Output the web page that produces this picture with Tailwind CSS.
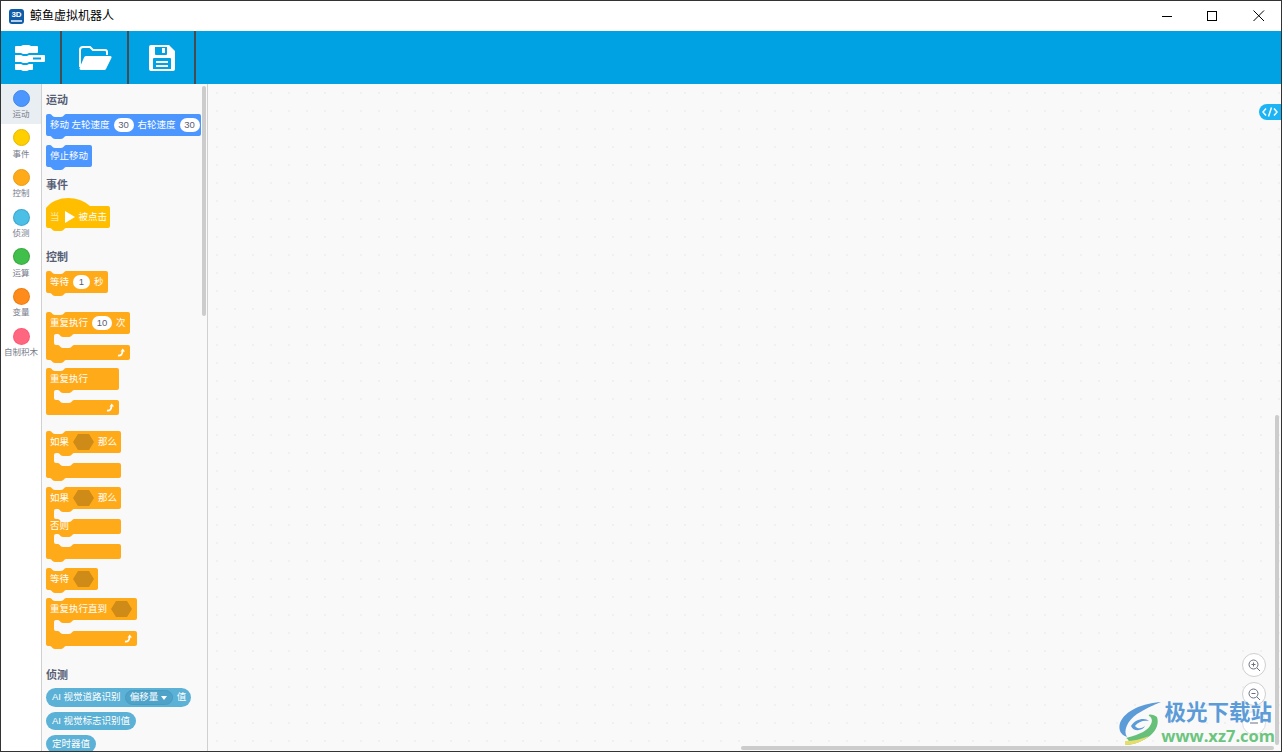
<!DOCTYPE html>
<html lang="zh-CN">
<head>
    <meta charset="UTF-8">
    <title>鲸鱼虚拟机器人</title>
    <script src="https://cdn.jsdelivr.net/npm/@tailwindcss/browser@4"></script>
</head>
<body class="overflow-hidden bg-white font-['Liberation_Sans','Noto_Sans_CJK_SC',sans-serif]">
<div class="relative flex flex-col w-full h-screen overflow-hidden border border-[#333333]">

    <!-- title bar -->
    <div class="flex items-center h-[30px] shrink-0 bg-white">
        <div class="ml-2 w-[15px] h-[15px] rounded-[3px] bg-[#0f5ca8] flex flex-col items-center justify-center text-white font-bold text-[8px] leading-[8px]">3D<span class="w-[11px] h-[2px] mt-[1px] bg-white/70"></span></div>
        <span class="ml-[6px] text-[12px] text-black">鲸鱼虚拟机器人</span>
        <div class="ml-auto flex items-center h-full">
            <svg width="46" height="30"><path d="M19 15.500H29" stroke="#000" fill="none"/></svg>
            <svg width="46" height="30"><rect x="18.500" y="10.500" width="9" height="9" stroke="#000" fill="none"/></svg>
            <svg width="46" height="30"><path d="M18.500 9.500L29 20M29 9.500L18.500 20" stroke="#000" fill="none"/></svg>
        </div>
    </div>

    <!-- toolbar -->
    <div class="flex h-[53px] shrink-0 bg-[#00a2e3]">
        <button class="w-[61px] h-full flex items-center justify-center border-r-2 border-[#444b52]">
            <svg class="-ml-[2px]" width="30" height="27" viewBox="0 0 30 27" fill="#fff">
                <path d="M1 2h5l2-1h6l2 1h6a1 1 0 0 1 1 1v5a1 1 0 0 1-1 1H14l-2 1H8L6 9H1a1 1 0 0 1-1-1V3a1 1 0 0 1 1-1z"/>
                <path fill-rule="evenodd" d="M0 11h6l2 1h4l2-1h15a1 1 0 0 1 1 1v5a1 1 0 0 1-1 1H14l-2 1H8l-2-1H0zM18 13.500v2h8v-2z"/>
                <path d="M0 20h6l2 1h4l2-1h4v5a1 1 0 0 1-1 1H14l-2 1H8l-2-1H1a1 1 0 0 1-1-1z"/>
            </svg>
        </button>
        <button class="w-[67px] h-full flex items-center justify-center border-r-2 border-[#444b52]">
            <svg width="34" height="26" viewBox="0 0 34 26" fill="none">
                <path d="M2 22V5a3 3 0 0 1 3-3h7l3 3h12a2 2 0 0 1 2 2v3" stroke="#fff" stroke-width="2"/>
                <path d="M8 11h24a1.500 1.500 0 0 1 1.400 2L28 24a2 2 0 0 1-2 1H3a1.500 1.500 0 0 1-1.400-2L6 12.500A2 2 0 0 1 8 11z" fill="#fff"/>
            </svg>
        </button>
        <button class="w-[67px] h-full flex items-center justify-center border-r-2 border-[#444b52]">
            <svg width="26" height="26" viewBox="0 0 26 26">
                <path fill="#fff" fill-rule="evenodd" d="M2 0h18l6 6v18a2 2 0 0 1-2 2H2a2 2 0 0 1-2-2V2a2 2 0 0 1 2-2zM6 2v7a1 1 0 0 0 1 1h10a1 1 0 0 0 1-1V2zM4 14v10h18V14a1 1 0 0 0-1-1H5a1 1 0 0 0-1 1z"/>
                <path fill="#fff" d="M13 3h3v5h-3zM7 16h12v2H7zM7 20h12v2H7z"/>
            </svg>
        </button>
    </div>

    <div class="flex flex-1 min-h-0">
        <!-- category tabs -->
        <div class="w-[41px] shrink-0 flex flex-col text-[8.500px] text-[#777c8a] border-r border-[#d0d0d0] bg-white">
            <div class="h-[39.700px] flex flex-col items-center pt-[5.500px] bg-[#e9eef2]">
                <span class="w-[17px] h-[17px] rounded-full bg-[#4c97ff] border border-[#3f87ea]"></span><span class="leading-[12px] mt-[1.500px]">运动</span>
            </div>
            <div class="h-[39.700px] flex flex-col items-center pt-[5.500px]">
                <span class="w-[17px] h-[17px] rounded-full bg-[#ffcf00] border border-[#e6b800]"></span><span class="leading-[12px] mt-[1.500px]">事件</span>
            </div>
            <div class="h-[39.700px] flex flex-col items-center pt-[5.500px]">
                <span class="w-[17px] h-[17px] rounded-full bg-[#ffab19] border border-[#ec9c13]"></span><span class="leading-[12px] mt-[1.500px]">控制</span>
            </div>
            <div class="h-[39.700px] flex flex-col items-center pt-[5.500px]">
                <span class="w-[17px] h-[17px] rounded-full bg-[#4cbfe6] border border-[#2e8eb8]/50"></span><span class="leading-[12px] mt-[1.500px]">侦测</span>
            </div>
            <div class="h-[39.700px] flex flex-col items-center pt-[5.500px]">
                <span class="w-[17px] h-[17px] rounded-full bg-[#40bf4a] border border-[#389438]/50"></span><span class="leading-[12px] mt-[1.500px]">运算</span>
            </div>
            <div class="h-[39.700px] flex flex-col items-center pt-[5.500px]">
                <span class="w-[17px] h-[17px] rounded-full bg-[#ff8c1a] border border-[#db6e00]/50"></span><span class="leading-[12px] mt-[1.500px]">变量</span>
            </div>
            <div class="h-[39.700px] flex flex-col items-center pt-[5.500px]">
                <span class="w-[17px] h-[17px] rounded-full bg-[#ff6680] border border-[#ff3355]/30"></span><span class="leading-[12px] mt-[1.500px] whitespace-nowrap">自制积木</span>
            </div>
        </div>

        <!-- block flyout -->
        <div class="relative w-[166px] shrink-0 overflow-hidden flex flex-col items-start pl-[4px] bg-[#f9f9f9] border-r border-[#d0d0d0] text-white text-[9.500px]">
            <h3 class="mt-[9px] h-[14px] leading-[14px] text-[11px] font-bold text-[#575e75]">运动</h3>

            <div class="relative mt-[7px] w-[155px] h-[22px] shrink-0 flex items-center pl-[4px] whitespace-nowrap">
                <svg class="absolute left-0 top-0 overflow-visible" width="155" height="22"><path fill="#4c97ff" d="M0,2 a2,2 0 0 1 2,-2 H4 c2,0 2,3 5,3 H15 c3,0 3,-3 5,-3 H153 a2,2 0 0 1 2,2 V20 a2,2 0 0 1 -2,2 H20 c-2,0 -2,3 -5,3 H9 c-3,0 -3,-3 -5,-3 H2 a2,2 0 0 1 -2,-2 Z"/></svg>
                <span class="relative">移动</span>
                <span class="relative ml-[2.500px]">左轮速度</span>
                <span class="relative ml-[4px] w-[20px] h-[14px] shrink-0 rounded-full bg-white text-[#575e75] flex items-center justify-center">30</span>
                <span class="relative ml-[4px]">右轮速度</span>
                <span class="relative ml-[4px] w-[20px] h-[14px] shrink-0 rounded-full bg-white text-[#575e75] flex items-center justify-center">30</span>
            </div>

            <div class="relative mt-[9px] w-[46px] h-[22px] shrink-0 flex items-center pl-[4px] whitespace-nowrap">
                <svg class="absolute left-0 top-0 overflow-visible" width="46" height="22"><path fill="#4c97ff" d="M0,2 a2,2 0 0 1 2,-2 H4 c2,0 2,3 5,3 H15 c3,0 3,-3 5,-3 H44 a2,2 0 0 1 2,2 V20 a2,2 0 0 1 -2,2 H20 c-2,0 -2,3 -5,3 H9 c-3,0 -3,-3 -5,-3 H2 a2,2 0 0 1 -2,-2 Z"/></svg>
                <span class="relative">停止移动</span>
            </div>

            <h3 class="mt-[11px] h-[14px] leading-[14px] text-[11px] font-bold text-[#575e75]">事件</h3>

            <div class="relative mt-[6px] w-[64px] h-[31px] shrink-0 flex items-center pl-[4px] pt-[7px] whitespace-nowrap">
                <svg class="absolute left-0 top-0 overflow-visible" width="64" height="31"><path fill="#ffbf00" d="M0,10 C10,-3 32,-3 44,8 H62 a2,2 0 0 1 2,2 V28 a2,2 0 0 1 -2,2 H20 c-2,0 -2,3 -5,3 H9 c-3,0 -3,-3 -5,-3 H2 a2,2 0 0 1 -2,-2 Z"/></svg>
                <span class="relative text-[#ffe9a8]">当</span>
                <svg class="relative ml-[5px]" width="10" height="12"><path d="M0 0L10 6L0 12Z" fill="#fff"/></svg>
                <span class="relative ml-[4px]">被点击</span>
            </div>

            <h3 class="mt-[20.500px] h-[14px] leading-[14px] text-[11px] font-bold text-[#575e75]">控制</h3>

            <div class="relative mt-[7.500px] w-[62px] h-[22px] shrink-0 flex items-center pl-[4px] whitespace-nowrap">
                <svg class="absolute left-0 top-0 overflow-visible" width="62" height="22"><path fill="#ffab19" d="M0,2 a2,2 0 0 1 2,-2 H4 c2,0 2,3 5,3 H15 c3,0 3,-3 5,-3 H60 a2,2 0 0 1 2,2 V20 a2,2 0 0 1 -2,2 H20 c-2,0 -2,3 -5,3 H9 c-3,0 -3,-3 -5,-3 H2 a2,2 0 0 1 -2,-2 Z"/></svg>
                <span class="relative">等待</span>
                <span class="relative ml-[4px] w-[17px] h-[14px] rounded-full bg-white text-[#575e75] flex items-center justify-center">1</span>
                <span class="relative ml-[4px]">秒</span>
            </div>

            <div class="relative mt-[19px] w-[84px] h-[48px] shrink-0 whitespace-nowrap">
                <svg class="absolute left-0 top-0 overflow-visible" width="84" height="48"><path fill="#ffab19" d="M0,2 a2,2 0 0 1 2,-2 H4 c2,0 2,3 5,3 H15 c3,0 3,-3 5,-3 H82 a2,2 0 0 1 2,2 V20 a2,2 0 0 1 -2,2 H28 c-2,0 -2,3 -5,3 H17 c-3,0 -3,-3 -5,-3 H10 a2,2 0 0 0 -2,2 V31 a2,2 0 0 0 2,2 H12 c2,0 2,3 5,3 H23 c3,0 3,-3 5,-3 H82 a2,2 0 0 1 2,2 V46 a2,2 0 0 1 -2,2 H20 c-2,0 -2,3 -5,3 H9 c-3,0 -3,-3 -5,-3 H2 a2,2 0 0 1 -2,-2 Z"/></svg>
                <div class="relative h-[22px] flex items-center pl-[4px]">
                    <span>重复执行</span>
                    <span class="ml-[4px] w-[20px] h-[14px] rounded-full bg-white text-[#575e75] flex items-center justify-center">10</span>
                    <span class="ml-[4px]">次</span>
                </div>
                <svg class="absolute right-[4px] bottom-[3px]" width="9" height="9" viewBox="0 0 9 9" fill="none"><path d="M1 7.500C4 8 5.500 6 5.500 3" stroke="#fff" stroke-width="1.800"/><path d="M3.500 3.500L5.700 .5L8 3.500Z" fill="#fff"/></svg>
            </div>

            <div class="relative mt-[8px] w-[73px] h-[47px] shrink-0 whitespace-nowrap">
                <svg class="absolute left-0 top-0 overflow-visible" width="73" height="47"><path fill="#ffab19" d="M0,2 a2,2 0 0 1 2,-2 H4 c2,0 2,3 5,3 H15 c3,0 3,-3 5,-3 H71 a2,2 0 0 1 2,2 V20 a2,2 0 0 1 -2,2 H28 c-2,0 -2,3 -5,3 H17 c-3,0 -3,-3 -5,-3 H10 a2,2 0 0 0 -2,2 V30 a2,2 0 0 0 2,2 H12 c2,0 2,3 5,3 H23 c3,0 3,-3 5,-3 H71 a2,2 0 0 1 2,2 V45 a2,2 0 0 1 -2,2 H2 a2,2 0 0 1 -2,-2 Z"/></svg>
                <div class="relative h-[22px] flex items-center pl-[4px]"><span>重复执行</span></div>
                <svg class="absolute right-[4px] bottom-[3px]" width="9" height="9" viewBox="0 0 9 9" fill="none"><path d="M1 7.500C4 8 5.500 6 5.500 3" stroke="#fff" stroke-width="1.800"/><path d="M3.500 3.500L5.700 .5L8 3.500Z" fill="#fff"/></svg>
            </div>

            <div class="relative mt-[16px] w-[75px] h-[47px] shrink-0 whitespace-nowrap">
                <svg class="absolute left-0 top-0 overflow-visible" width="75" height="47"><path fill="#ffab19" d="M0,2 a2,2 0 0 1 2,-2 H4 c2,0 2,3 5,3 H15 c3,0 3,-3 5,-3 H73 a2,2 0 0 1 2,2 V20 a2,2 0 0 1 -2,2 H28 c-2,0 -2,3 -5,3 H17 c-3,0 -3,-3 -5,-3 H10 a2,2 0 0 0 -2,2 V30 a2,2 0 0 0 2,2 H12 c2,0 2,3 5,3 H23 c3,0 3,-3 5,-3 H73 a2,2 0 0 1 2,2 V45 a2,2 0 0 1 -2,2 H20 c-2,0 -2,3 -5,3 H9 c-3,0 -3,-3 -5,-3 H2 a2,2 0 0 1 -2,-2 Z"/></svg>
                <div class="relative h-[22px] flex items-center pl-[4px]">
                    <span>如果</span>
                    <svg class="ml-[4px]" width="21" height="16"><path d="M5 0H16L21 8L16 16H5L0 8Z" fill="#cf8b17"/></svg>
                    <span class="ml-[4px]">那么</span>
                </div>
            </div>

            <div class="relative mt-[9px] w-[75px] h-[72px] shrink-0 whitespace-nowrap">
                <svg class="absolute left-0 top-0 overflow-visible" width="75" height="72"><path fill="#ffab19" d="M0,2 a2,2 0 0 1 2,-2 H4 c2,0 2,3 5,3 H15 c3,0 3,-3 5,-3 H73 a2,2 0 0 1 2,2 V20 a2,2 0 0 1 -2,2 H28 c-2,0 -2,3 -5,3 H17 c-3,0 -3,-3 -5,-3 H10 a2,2 0 0 0 -2,2 V30 a2,2 0 0 0 2,2 H12 c2,0 2,3 5,3 H23 c3,0 3,-3 5,-3 H73 a2,2 0 0 1 2,2 V45 a2,2 0 0 1 -2,2 H28 c-2,0 -2,3 -5,3 H17 c-3,0 -3,-3 -5,-3 H10 a2,2 0 0 0 -2,2 V55 a2,2 0 0 0 2,2 H12 c2,0 2,3 5,3 H23 c3,0 3,-3 5,-3 H73 a2,2 0 0 1 2,2 V70 a2,2 0 0 1 -2,2 H20 c-2,0 -2,3 -5,3 H9 c-3,0 -3,-3 -5,-3 H2 a2,2 0 0 1 -2,-2 Z"/></svg>
                <div class="relative h-[22px] flex items-center pl-[4px]">
                    <span>如果</span>
                    <svg class="ml-[4px]" width="21" height="16"><path d="M5 0H16L21 8L16 16H5L0 8Z" fill="#cf8b17"/></svg>
                    <span class="ml-[4px]">那么</span>
                </div>
                <div class="relative mt-[10px] h-[15px] flex items-center pl-[4px]"><span>否则</span></div>
            </div>

            <div class="relative mt-[9px] w-[52px] h-[22px] shrink-0 flex items-center pl-[4px] whitespace-nowrap">
                <svg class="absolute left-0 top-0 overflow-visible" width="52" height="22"><path fill="#ffab19" d="M0,2 a2,2 0 0 1 2,-2 H4 c2,0 2,3 5,3 H15 c3,0 3,-3 5,-3 H50 a2,2 0 0 1 2,2 V20 a2,2 0 0 1 -2,2 H20 c-2,0 -2,3 -5,3 H9 c-3,0 -3,-3 -5,-3 H2 a2,2 0 0 1 -2,-2 Z"/></svg>
                <span class="relative">等待</span>
                <svg class="relative ml-[4px]" width="21" height="16"><path d="M5 0H16L21 8L16 16H5L0 8Z" fill="#cf8b17"/></svg>
            </div>

            <div class="relative mt-[8px] w-[91px] h-[48px] shrink-0 whitespace-nowrap">
                <svg class="absolute left-0 top-0 overflow-visible" width="91" height="48"><path fill="#ffab19" d="M0,2 a2,2 0 0 1 2,-2 H4 c2,0 2,3 5,3 H15 c3,0 3,-3 5,-3 H89 a2,2 0 0 1 2,2 V20 a2,2 0 0 1 -2,2 H28 c-2,0 -2,3 -5,3 H17 c-3,0 -3,-3 -5,-3 H10 a2,2 0 0 0 -2,2 V31 a2,2 0 0 0 2,2 H12 c2,0 2,3 5,3 H23 c3,0 3,-3 5,-3 H89 a2,2 0 0 1 2,2 V46 a2,2 0 0 1 -2,2 H20 c-2,0 -2,3 -5,3 H9 c-3,0 -3,-3 -5,-3 H2 a2,2 0 0 1 -2,-2 Z"/></svg>
                <div class="relative h-[22px] flex items-center pl-[4px]">
                    <span>重复执行直到</span>
                    <svg class="ml-[4px]" width="21" height="16"><path d="M5 0H16L21 8L16 16H5L0 8Z" fill="#cf8b17"/></svg>
                </div>
                <svg class="absolute right-[4px] bottom-[3px]" width="9" height="9" viewBox="0 0 9 9" fill="none"><path d="M1 7.500C4 8 5.500 6 5.500 3" stroke="#fff" stroke-width="1.800"/><path d="M3.500 3.500L5.700 .5L8 3.500Z" fill="#fff"/></svg>
            </div>

            <h3 class="mt-[22px] h-[14px] leading-[14px] text-[11px] font-bold text-[#575e75]">侦测</h3>

            <div class="mt-[6px] w-[145px] h-[19px] shrink-0 rounded-full bg-[#5cb1d6] flex items-center pl-[6px] whitespace-nowrap">
                <span>AI 视觉道路识别</span>
                <span class="ml-[4px] w-[48px] h-[15px] rounded-full bg-[#4fa3c9] border border-[#4a9bc0] flex items-center justify-center">偏移量<svg class="ml-[3px]" width="6" height="4"><path d="M0 0H6L3 4Z" fill="#fff"/></svg></span>
                <span class="ml-[4px]">值</span>
            </div>
            <div class="mt-[5px] w-[90px] h-[18px] shrink-0 rounded-full bg-[#5cb1d6] flex items-center pl-[6px] whitespace-nowrap">AI 视觉标志识别值</div>
            <div class="mt-[5px] w-[50px] h-[18px] shrink-0 rounded-full bg-[#5cb1d6] flex items-center pl-[6px] whitespace-nowrap">定时器值</div>

            <!-- flyout scrollbar -->
            <div class="absolute right-[1px] top-[2px] w-[4px] h-[230px] rounded-full bg-[#cccccc]"></div>
        </div>

        <!-- workspace -->
        <div class="relative flex-1 bg-[#f9f9f9] bg-[radial-gradient(circle,#f0f0f0_1px,transparent_1px)] bg-[length:18px_18px]">
            <div class="absolute right-0 top-[20px] w-[22px] h-[16px] rounded-l-full bg-[#1cb4f5] flex items-center justify-center">
                <svg width="16" height="10" viewBox="0 0 16 10" fill="none" stroke="#fff" stroke-width="1.500"><path d="M4 1.500L1 5L4 8.500M12 1.500L15 5L12 8.500M9.500 .5L6.500 9.500"/></svg>
            </div>

            <!-- zoom controls -->
            <div class="absolute right-[15px] top-[569px] w-[24px] h-[24px] rounded-full border border-[#cfcfcf] bg-white flex items-center justify-center">
                <svg width="14" height="14" viewBox="0 0 14 14" fill="none" stroke="#6b7080"><circle cx="6.500" cy="6.500" r="4.500"/><path d="M10 10L13 13M4.500 6.500H8.500M6.500 4.500V8.500"/></svg>
            </div>
            <div class="absolute right-[15px] top-[598px] w-[24px] h-[24px] rounded-full border border-[#cfcfcf] bg-white flex items-center justify-center">
                <svg width="14" height="14" viewBox="0 0 14 14" fill="none" stroke="#6b7080"><circle cx="6.500" cy="6.500" r="4.500"/><path d="M10 10L13 13M4.500 6.500H8.500"/></svg>
            </div>
            <div class="absolute right-[15px] top-[627px] w-[24px] h-[24px] rounded-full border border-[#dddddd] bg-white flex items-center justify-center">
                <svg width="10" height="10"><path d="M1 5H9" stroke="#6b7080"/></svg>
            </div>

            <!-- workspace scrollbars -->
            <div class="absolute right-[2px] top-[331px] w-[4px] h-[330px] rounded-full bg-[#cccccc]"></div>
            <div class="absolute right-[7px] bottom-[1px] w-[533px] h-[4px] rounded-full bg-[#cccccc]"></div>

            <!-- watermark -->
            <div class="absolute right-[6px] bottom-[5px] flex items-start">
                <svg width="43" height="44" viewBox="0 0 43 44" fill="none">
                    <path d="M43 1C26 2 7 9 2 22C0 29 3 34 9 36C5 30 9 20 19 13C27 8 35 4 43 1Z" fill="#5b9bd8"/>
                    <path d="M13 25C17 18 27 16 31 20C25 19 20 21 17 25C20 29 25 27 27 25C25 30 15 31 13 25Z" fill="#5b9bd8"/>
                    <path d="M39 16C34 13 30 13 31 15C37 18 33 27 25 31C19 34 12 36 8 37C13 40 10 42 7 44C22 44 44 32 39 16Z" fill="#66c07a"/>
                    <path d="M7 44C16 44 26 40 31 35C24 38 15 40 7 40Z" fill="#e8dc6a"/>
                </svg>
                <div class="flex flex-col items-center">
                    <span class="text-[21.500px] font-bold text-[#5b9bd8] whitespace-nowrap leading-[24px]">极光下载站</span>
                    <span class="mt-[1px] text-[16.500px] font-bold text-[#6cc57f] whitespace-nowrap font-['Open_Sans',sans-serif] leading-[20px]">www.xz7.com</span>
                </div>
            </div>
        </div>
    </div>
</div>
</body>
</html>
